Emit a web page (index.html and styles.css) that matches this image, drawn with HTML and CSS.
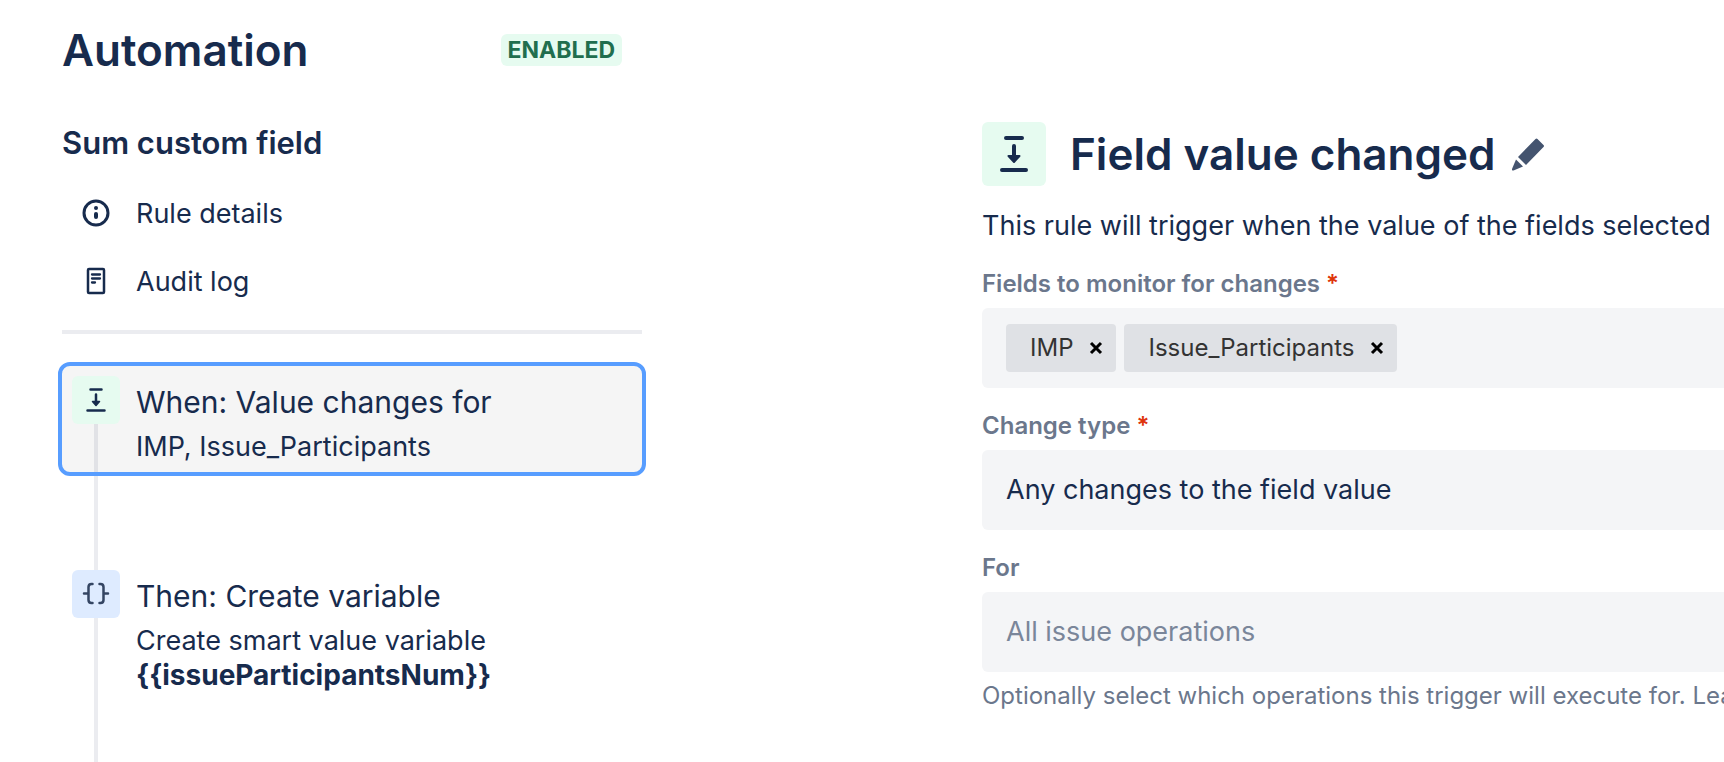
FILE: index.html
```
<!DOCTYPE html>
<html lang="en">
<head>
	<meta charset="utf-8">
	<title>Automation</title>
	<meta name="viewport" content="width=device-width, initial-scale=1.0">
	<link rel="stylesheet" href="styles.css">
</head>
<body>
	<div class="layout">
		<aside class="sidebar">
			<header class="sidebar-header">
				<h1>Automation</h1>
				<span class="badge">ENABLED</span>
			</header>
			<h2>Sum custom field</h2>
			<nav class="rule-nav">
				<a href="#details">
					<svg width="32" height="32" viewBox="0 0 32 32">
						<circle cx="16" cy="15" r="12" fill="none" stroke="currentColor" stroke-width="3"/>
						<circle cx="16" cy="10" r="2" fill="currentColor"/>
						<path d="M16 16v3" stroke="currentColor" stroke-width="4" stroke-linecap="round"/>
					</svg>
					Rule details
				</a>
				<a href="#audit">
					<svg width="32" height="32" viewBox="0 0 32 32" fill="none" stroke="currentColor" stroke-linecap="round">
						<rect x="8" y="3" width="16" height="24" rx="1" stroke-width="2.5"/>
						<path d="M12 8.500h8M12 12.500h8M12 16.500h3" stroke-width="2.300"/>
					</svg>
					Audit log
				</a>
			</nav>
			<ol class="steps">
				<li class="step">
					<a href="#trigger" class="step-card selected">
						<span class="step-icon trigger">
							<svg width="32" height="32" viewBox="0 0 32 32" stroke="currentColor" stroke-width="2.500" stroke-linecap="round" stroke-linejoin="round">
								<path d="M10.500 5.500h11M7.500 26.500h17M16 10.500v7" fill="none"/>
								<path d="M12.500 17.500h7L16 21.500z" fill="currentColor" stroke-width="1.500"/>
							</svg>
						</span>
						<span class="step-text">
							<span class="step-title">When: Value changes for</span>
							<span>IMP, Issue_Participants</span>
						</span>
					</a>
				</li>
				<li class="step">
					<a href="#variable" class="step-card">
						<span class="step-icon action">
							<svg width="32" height="32" viewBox="0 0 32 32" fill="none" stroke="currentColor" stroke-width="2.500" stroke-linecap="round" stroke-linejoin="round">
								<path d="M12.500 6H11.500Q8.500 6 8.500 9V22Q8.500 25 11.500 25H12.500M8.500 15.500H4"/>
								<path d="M19.500 6H20.500Q23.500 6 23.500 9V22Q23.500 25 20.500 25H19.500M23.500 15.500H28"/>
							</svg>
						</span>
						<span class="step-text">
							<span class="step-title">Then: Create variable</span>
							<span>Create smart value variable</span>
							<strong>{{issueParticipantsNum}}</strong>
						</span>
					</a>
				</li>
			</ol>
		</aside>

		<main class="editor">
			<header class="editor-header">
				<span class="editor-icon">
					<svg width="48" height="48" viewBox="0 0 48 48" stroke="currentColor" stroke-width="4" stroke-linecap="round" stroke-linejoin="round">
						<path d="M16 8h16M12 40h24M24 16v10" fill="none"/>
						<path d="M18.500 26h11L24 32z" fill="currentColor" stroke-width="2"/>
					</svg>
				</span>
				<h1>Field value changed</h1>
				<button type="button" class="edit" aria-label="Rename">
					<svg width="36" height="36" viewBox="0 0 36 36" fill="currentColor">
						<path d="M25.500 3Q26.500 2 27.500 3L33.500 9Q34.500 10 33.500 11L16 29L8 21Z"/>
						<path d="M6 23.500L13 30.500L3.500 34.500Q1.500 35 2 33Z"/>
					</svg>
				</button>
			</header>
			<p class="description">This rule will trigger when the value of the fields selected</p>

			<form>
				<div class="field">
					<div class="label" id="fieldsLabel">Fields to monitor for changes<span class="required">*</span></div>
					<div class="control tags" role="group" aria-labelledby="fieldsLabel">
						<span class="tag">IMP
							<button type="button" aria-label="Remove IMP"><svg width="14" height="14" viewBox="0 0 14 14"><path d="M2 2l10 10M12 2L2 12" stroke="currentColor" stroke-width="3"/></svg></button>
						</span>
						<span class="tag">Issue_Participants
							<button type="button" aria-label="Remove Issue_Participants"><svg width="14" height="14" viewBox="0 0 14 14"><path d="M2 2l10 10M12 2L2 12" stroke="currentColor" stroke-width="3"/></svg></button>
						</span>
					</div>
				</div>
				<div class="field">
					<label class="label" for="changeType">Change type<span class="required">*</span></label>
					<select class="control" id="changeType">
						<option>Any changes to the field value</option>
					</select>
				</div>
				<div class="field">
					<label class="label" for="operations">For</label>
					<select class="control placeholder" id="operations">
						<option>All issue operations</option>
					</select>
					<p class="help">Optionally select which operations this trigger will execute for. Lea</p>
				</div>
			</form>
		</main>
	</div>
</body>
</html>
```
FILE: styles.css
```
* {
	box-sizing: border-box;
}

body {
	margin: 0;
	background-color: #fff;
	color: #172b4d;
	font-family: Inter, sans-serif;
	font-size: 27px;
	line-height: 34px;
}

h1, h2, p, ol {
	margin: 0;
	padding: 0;
}

h1 {
	font-size: 44px;
	font-weight: 600;
	line-height: 56px;
}

h2 {
	padding: 0 4px;
	font-size: 31px;
	font-weight: 600;
	line-height: 42px;
}

a {
	color: inherit;
	text-decoration: none;
}

svg {
	display: block;
	flex: none;
}

button {
	padding: 0;
	border: none;
	background: none;
	color: inherit;
	cursor: pointer;
}

.layout {
	display: flex;
	gap: 336px;
	min-height: 100vh;
	padding-left: 58px;
	overflow: hidden;
}

/* Sidebar */
.sidebar {
	display: flex;
	flex-direction: column;
	flex: none;
	width: 588px;
	padding-top: 22px;
}

.sidebar-header {
	display: flex;
	align-items: center;
	justify-content: space-between;
	margin-bottom: 44px;
	padding: 0 24px 0 4px;
}

.badge {
	padding: 0 7px;
	border-radius: 6px;
	background-color: #e6fbf0;
	color: #216e4e;
	font-size: 23px;
	font-weight: 700;
	line-height: 32px;
}

.rule-nav {
	display: flex;
	flex-direction: column;
	gap: 34px;
	margin: 0 4px 28px;
	padding: 33px 18px 31px;
	border-bottom: 4px solid #ebecf0;
}

.rule-nav a {
	display: flex;
	align-items: center;
	gap: 24px;
}

.steps {
	display: flex;
	flex-direction: column;
	flex: 1;
	list-style: none;
}

.step {
	position: relative;
	padding-bottom: 80px;
}

.step:last-child {
	flex: 1;
}

/* line that joins the steps */
.step::before {
	content: "";
	position: absolute;
	top: 0;
	bottom: 0;
	left: 36px;
	width: 4px;
	background-color: #ebecf0;
}

.step:first-child::before {
	top: 16px;
}

.step-card {
	display: flex;
	gap: 16px;
	position: relative;
	min-height: 114px;
	padding: 10px 10px 4px;
	border: 4px solid transparent;
	border-radius: 12px;
}

.step-card.selected {
	border-color: #579dff;
	background-color: rgba(0, 0, 0, 0.04);
}

.step-icon {
	display: flex;
	align-items: center;
	justify-content: center;
	flex: none;
	width: 48px;
	height: 48px;
	border-radius: 6px;
}

.trigger, .editor-icon {
	background-color: #e6fbf0;
}

.action {
	background-color: #deebff;
	color: #344563;
}

.step-text {
	display: flex;
	flex-direction: column;
	padding-top: 6px;
}

.step-text strong {
	font-size: 28px;
}

.step-title {
	margin-bottom: 8px;
	font-size: 30px;
	line-height: 40px;
}

/* Editor */
.editor {
	flex: 1;
	min-width: 0;
	padding-top: 122px;
}

.editor-header {
	display: flex;
	align-items: center;
	margin-bottom: 20px;
	white-space: nowrap;
}

.editor-icon {
	display: flex;
	align-items: center;
	justify-content: center;
	flex: none;
	width: 64px;
	height: 64px;
	margin-right: 24px;
	border-radius: 6px;
}

.edit {
	margin-left: 14px;
	color: #44546f;
}

.description {
	margin-bottom: 22px;
	line-height: 40px;
	white-space: nowrap;
}

.field {
	margin-bottom: 22px;
}

.label {
	display: block;
	margin-bottom: 8px;
	color: #6b778c;
	font-size: 24px;
	font-weight: 600;
	line-height: 32px;
}

.required {
	padding-left: 6px;
	color: #de350b;
}

.control {
	display: block;
	appearance: none;
	width: 100%;
	height: 80px;
	padding: 0 24px;
	border: none;
	border-radius: 6px 0 0 6px;
	background-color: #f4f5f7;
	color: #172b4d;
	font: inherit;
}

.placeholder {
	color: #7a869a;
}

.tags {
	display: flex;
	align-items: center;
	gap: 8px;
}

.tag {
	display: flex;
	align-items: center;
	gap: 16px;
	height: 48px;
	padding: 0 13px 0 24px;
	border-radius: 4px;
	background-color: #dfe1e5;
	color: #333;
	font-size: 24px;
}

.tag button {
	color: #000;
}

.help {
	margin-top: 8px;
	color: #6b778c;
	font-size: 24px;
	line-height: 32px;
	white-space: nowrap;
}
```
